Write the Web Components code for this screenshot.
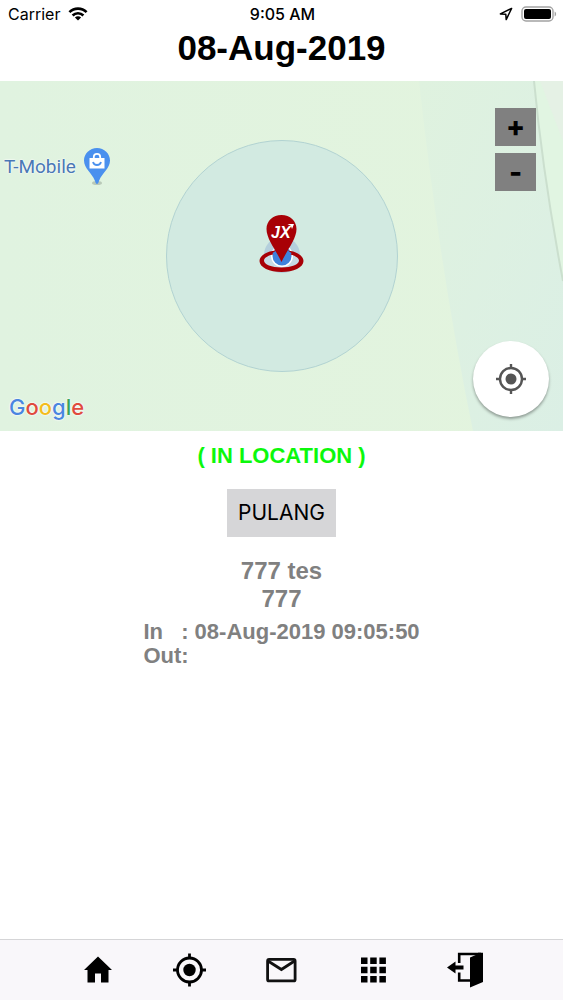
<!DOCTYPE html>
<html lang="id">
<head>
<meta charset="utf-8">
<meta name="viewport" content="width=device-width, initial-scale=1">
<title>Absensi</title>
<style>
    html, body { height: 100%; }
    body {
        margin: 0;
        background: #fff;
        color: #000;
        font-family: "Liberation Sans", Arial, sans-serif;
    }
</style>
</head>
<body>
<attendance-app></attendance-app>

<script>
class StatusBar extends HTMLElement {
    constructor() {
        super();
        this.attachShadow({ mode: 'open' });
    }

    connectedCallback() {
        this.shadowRoot.innerHTML = `
            <style>
                :host {
                    display: grid;
                    grid-template-columns: 1fr auto 1fr;
                    align-items: center;
                    height: 28px;
                    padding: 0 6px 0 8px;
                    font: 16px/28px Inter, sans-serif;
                }
                .left, .right { display: flex; align-items: center; gap: 8px; }
                .right { justify-content: flex-end; }
                .time { font-weight: 500; }
                svg { display: block; }
            </style>
            <div class="left">
                <slot name="carrier"></slot>
                <svg width="20" height="14" viewBox="0 0 20 14" fill="none" stroke="#000" stroke-width="2.6">
                    <path d="M1.4 5.2C6.2.4 13.8.4 18.6 5.2"/>
                    <path d="M4.6 8.5C7.6 5.5 12.4 5.5 15.4 8.5"/>
                    <path d="M10 13.6L6.9 10.5C8.6 8.9 11.4 8.9 13.1 10.5Z" fill="#000" stroke="none"/>
                </svg>
            </div>
            <div class="time"><slot name="time"></slot></div>
            <div class="right">
                <svg width="14" height="14" viewBox="0 0 14 14" fill="none" stroke="#000" stroke-width="1.5" stroke-linejoin="round">
                    <path d="M12.6 1.4L1.4 6.9L6.8 7.3L7.2 12.6Z"/>
                </svg>
                <svg width="36" height="16" viewBox="0 0 36 16">
                    <rect x="1" y="1" width="31" height="14" rx="4" fill="#fff" stroke="#a3a3a3" stroke-width="1.4"/>
                    <rect x="3" y="3" width="27" height="10" rx="2"/>
                    <path d="M33.6 5.5C35.6 6.2 35.6 9.8 33.6 10.5Z" fill="#a3a3a3"/>
                </svg>
            </div>
        `;
    }
}
customElements.define('status-bar', StatusBar);

class PlaceLabel extends HTMLElement {
    constructor() {
        super();
        this.attachShadow({ mode: 'open' });
    }

    connectedCallback() {
        this.shadowRoot.innerHTML = `
            <style>
                :host {
                    display: flex;
                    align-items: center;
                    gap: 7px;
                    color: #4a78b5;
                    font: 19px/38px Roboto, sans-serif;
                    text-shadow: 0 0 2px #fff, 0 0 2px #fff;
                }
            </style>
            <slot></slot>
            <svg width="28" height="38" viewBox="0 0 28 38">
                <ellipse cx="14" cy="35" rx="5" ry="2" fill="#b9c9b8"/>
                <path d="M14 0C6.8 0 1 5.6 1 12.5C1 20.5 8.500 24 12 33C13 37 15 37 16 33C19.5 24 27 20.5 27 12.5C27 5.6 21.2 0 14 0Z" fill="#4a90ee"/>
                <path d="M10.8 11V9C10.8 4.8 17.2 4.8 17.2 9V11" fill="none" stroke="#fff" stroke-width="1.8"/>
                <path d="M6.5 10H21.5V20.5H6.5Z" fill="#fff"/>
                <path d="M10 14C11 18 17 18 18 14" fill="none" stroke="#4a90ee" stroke-width="1.8"/>
            </svg>
        `;
    }
}
customElements.define('place-label', PlaceLabel);

class UserMarker extends HTMLElement {
    constructor() {
        super();
        this.attachShadow({ mode: 'open' });
    }

    connectedCallback() {
        this.shadowRoot.innerHTML = `
            <style>
                :host { display: block; }
                .radius {
                    box-sizing: border-box;
                    display: grid;
                    place-items: center;
                    width: 232px;
                    height: 232px;
                    border: 1px solid #b2d3d2;
                    border-radius: 50%;
                    background: #d2eae1;
                }
                svg { display: block; overflow: visible; }
                text { font: italic bold 16px "Liberation Sans", sans-serif; fill: #fff; }
            </style>
            <div class="radius">
                <svg width="46" height="86" viewBox="0 0 46 86">
                    <circle cx="23" cy="42" r="18" fill="#b4cfdc"/>
                    <ellipse cx="23" cy="48" rx="20.5" ry="9" fill="#c6dbe5"/>
                    <circle cx="23" cy="43" r="11" fill="#fff"/>
                    <circle cx="23" cy="43" r="9.5" fill="#3e82dc"/>
                    <path fill-rule="evenodd" d="M22.5 37C10.500 37 .5 41.5 .5 48C.5 54.5 10.5 59 22.5 59C34.5 59 44.500 54.5 44.5 48C44.5 41.5 34.5 37 22.5 37ZM22.5 40.5C32.5 40.5 40 44 40 47.500C40 51.5 32.5 54.500 22.5 54.5C12.500 54.5 5 51.5 5 47.5C5 44 12.5 40.5 22.5 40.5Z" fill="#a80006"/>
                    <path d="M13.5 40A10 10 0 0 0 32.5 40L28 37H18Z" fill="#3e82dc"/>
                    <path d="M22.5 2C14 2 7.5 8 7.5 16C7.5 26 17 37 22.5 49C28 37 37.5 26 37.5 16C37.5 8 31 2 22.5 2Z" fill="#a80006"/>
                    <text x="12" y="25">JX</text>
                    <path d="M28.5 11H35L33 16L32 13Z" fill="#fff"/>
                </svg>
            </div>
        `;
    }
}
customElements.define('user-marker', UserMarker);

class MapView extends HTMLElement {
    constructor() {
        super();
        this.attachShadow({ mode: 'open' });
    }

    connectedCallback() {
        this.shadowRoot.innerHTML = `
            <style>
                :host {
                    display: grid;
                    place-items: center;
                    position: relative;
                    height: 350px;
                    overflow: hidden;
                    background: #e1f3de;
                }
                .terrain { position: absolute; inset: 0; width: 100%; height: 100%; }
                user-marker { position: relative; }
                place-label { position: absolute; left: 4px; top: 67px; }
                .zoom {
                    position: absolute;
                    top: 27px;
                    right: 27px;
                    display: grid;
                    gap: 7px;
                }
                .zoom button {
                    width: 41px;
                    height: 38px;
                    padding: 0;
                    border: 0;
                    background: #808080;
                    color: #000;
                    font: 800 28px/38px Inter, sans-serif;
                }
                .locate {
                    position: absolute;
                    right: 14px;
                    bottom: 14px;
                    display: grid;
                    place-items: center;
                    width: 76px;
                    height: 76px;
                    padding: 0;
                    border: 0;
                    border-radius: 50%;
                    background: #fff;
                    box-shadow: 0 2px 3px rgba(0, 0, 0, 0.35);
                }
                .brand {
                    position: absolute;
                    left: 9px;
                    bottom: 10px;
                    font: 500 22px/28px Inter, sans-serif;
                    text-shadow: 0 0 2px #fff, 0 0 2px #fff;
                }
                .b { color: #4a86e0; }
                .r { color: #df4b3e; }
                .y { color: #f3bd1d; }
                .g { color: #3ba35a; }
            </style>
            <svg class="terrain" viewBox="0 0 563 350" preserveAspectRatio="none">
                <defs>
                    <linearGradient id="land" x2="1" y2="0">
                        <stop offset="0" stop-color="#e0f3e0"/>
                        <stop offset="1" stop-color="#e3f4de"/>
                    </linearGradient>
                    <linearGradient id="band" x2="1" y2="1">
                        <stop offset="0" stop-color="#dff2df"/>
                        <stop offset="1" stop-color="#dbefe5"/>
                    </linearGradient>
                </defs>
                <path d="M0 0H563V350H0Z" fill="url(#land)"/>
                <path d="M419 0H534Q543 95 563 200V350H473Q440 190 419 0Z" fill="url(#band)"/>
                <path d="M534 0H563V200Q543 95 534 0Z" fill="#e1f5e2"/>
                <path d="M540 0H563V60Z" fill="#e5f1e5"/>
                <path d="M534 0Q543 95 563 200" fill="none" stroke="#cbdfce" stroke-width="2"/>
            </svg>
            <user-marker></user-marker>
            <place-label><slot name="place"></slot></place-label>
            <div class="zoom">
                <button type="button">+</button>
                <button type="button">-</button>
            </div>
            <button class="locate" type="button" aria-label="My location">
                <svg width="30" height="30" viewBox="0 0 30 30" fill="none" stroke="#555" stroke-width="2.4">
                    <circle cx="15" cy="15" r="11"/>
                    <circle cx="15" cy="15" r="5.5" fill="#555" stroke="none"/>
                    <path d="M15 0V4M15 26V30M0 15H4M26 15H30"/>
                </svg>
            </button>
            <div class="brand"><span class="b">G</span><span class="r">o</span><span class="y">o</span><span class="b">g</span><span class="g">l</span><span class="r">e</span></div>
        `;
    }
}
customElements.define('map-view', MapView);

class AttendanceInfo extends HTMLElement {
    constructor() {
        super();
        this.attachShadow({ mode: 'open' });
    }

    connectedCallback() {
        this.shadowRoot.innerHTML = `
            <style>
                :host {
                    display: flex;
                    flex-direction: column;
                    align-items: center;
                    padding: 12px 16px;
                    color: #808080;
                    font-weight: bold;
                }
                p { margin: 0; }
                .state { color: #0cf80c; font-size: 22px; line-height: 26px; }
                button {
                    height: 48px;
                    margin: 20px 0;
                    padding: 0 11px;
                    border: 0;
                    background: #d6d6d8;
                    color: #000;
                    font: 21px/48px Inter, sans-serif;
                }
                .who { font-size: 24px; line-height: 28px; text-align: center; }
                dl {
                    display: grid;
                    grid-template-columns: auto auto;
                    column-gap: 6px;
                    margin: 7px 0;
                    font-size: 22px;
                    line-height: 24px;
                }
                dt { display: flex; justify-content: space-between; }
                dd { margin: 0; }
            </style>
            <p class="state"><slot name="state"></slot></p>
            <button type="button"><slot name="action"></slot></button>
            <p class="who"><slot name="name"></slot><br><slot name="code"></slot></p>
            <dl>
                <dt><span>In</span><span>:</span></dt>
                <dd><slot name="in"></slot></dd>
                <dt><span>Out</span><span>:</span></dt>
                <dd><slot name="out"></slot></dd>
            </dl>
        `;
    }
}
customElements.define('attendance-info', AttendanceInfo);

class TabBar extends HTMLElement {
    constructor() {
        super();
        this.attachShadow({ mode: 'open' });
    }

    connectedCallback() {
        this.shadowRoot.innerHTML = `
            <style>
                :host { display: block; border-top: 1px solid #d5d5d7; background: #f9f7fa; }
                nav {
                    display: grid;
                    grid-template-columns: repeat(5, 1fr);
                    height: 60px;
                    padding: 0 9%;
                }
                a { display: grid; place-items: center; color: #000; }
                svg { display: block; }
            </style>
            <nav>
                <a href="#home" aria-label="Home">
                    <svg width="36" height="36" viewBox="0 0 36 36">
                        <path d="M19 4.5L5 18H8.5V30.5H16V21.5H22V30.5H29.5V18H33Z"/>
                    </svg>
                </a>
                <a href="#location" aria-label="Location">
                    <svg width="36" height="36" viewBox="0 0 36 36" fill="none" stroke="#000" stroke-width="2.8">
                        <circle cx="18.5" cy="18" r="12"/>
                        <circle cx="18.5" cy="18" r="6.2" fill="#000" stroke="none"/>
                        <path d="M18.5 1.500V6M18.5 30V34.5M2 18H6.5M30.5 18H35"/>
                    </svg>
                </a>
                <a href="#mail" aria-label="Messages">
                    <svg width="36" height="36" viewBox="0 0 36 36" fill="none" stroke="#111" stroke-width="2.8">
                        <rect x="4.6" y="7.4" width="27.5" height="21.5" rx="1.5"/>
                        <path d="M5 9L18.4 17.5L31.5 9"/>
                    </svg>
                </a>
                <a href="#menu" aria-label="Menu">
                    <svg width="36" height="36" viewBox="0 0 36 36">
                        <path d="M5 5.5H11.5V12H5ZM14.2 5.5H20.7V12H14.2ZM23.4 5.5H29.9V12H23.4ZM5 14.7H11.5V21.2H5ZM14.2 14.7H20.7V21.2H14.2ZM23.4 14.7H29.9V21.2H23.4ZM5 23.9H11.5V30.4H5ZM14.2 23.900H20.7V30.4H14.2ZM23.4 23.9H29.9V30.4H23.4Z"/>
                    </svg>
                </a>
                <a href="#logout" aria-label="Log out">
                    <svg width="38" height="38" viewBox="0 0 38 38">
                        <path d="M12.2 12V3H34M12.2 21.5V29.5H24" fill="none" stroke="#000" stroke-width="2.6"/>
                        <path d="M23 6.5L31 3V1.7H36V31L23 36.5Z"/>
                        <path d="M0 16.5L8.5 10.5V14.6H16.5V18.4H8.5V22.5Z"/>
                    </svg>
                </a>
            </nav>
        `;
    }
}
customElements.define('tab-bar', TabBar);

class AttendanceApp extends HTMLElement {
    constructor() {
        super();
        this.attachShadow({ mode: 'open' });
    }

    connectedCallback() {
        this.shadowRoot.innerHTML = `
            <style>
                :host { display: flex; flex-direction: column; min-height: 100%; }
                h1 {
                    margin: 0;
                    padding-bottom: 13px;
                    font-size: 35px;
                    line-height: 40px;
                    text-align: center;
                }
                attendance-info { flex: 1; }
            </style>
            <status-bar>
                <span slot="carrier">Carrier</span>
                <span slot="time">9:05 AM</span>
            </status-bar>
            <h1>08-Aug-2019</h1>
            <map-view><span slot="place">T-Mobile</span></map-view>
            <attendance-info>
                <span slot="state">( IN LOCATION )</span>
                <span slot="action">PULANG</span>
                <span slot="name">777 tes</span>
                <span slot="code">777</span>
                <span slot="in">08-Aug-2019 09:05:50</span>
            </attendance-info>
            <tab-bar></tab-bar>
        `;
    }
}
customElements.define('attendance-app', AttendanceApp);
</script>
</body>
</html>
